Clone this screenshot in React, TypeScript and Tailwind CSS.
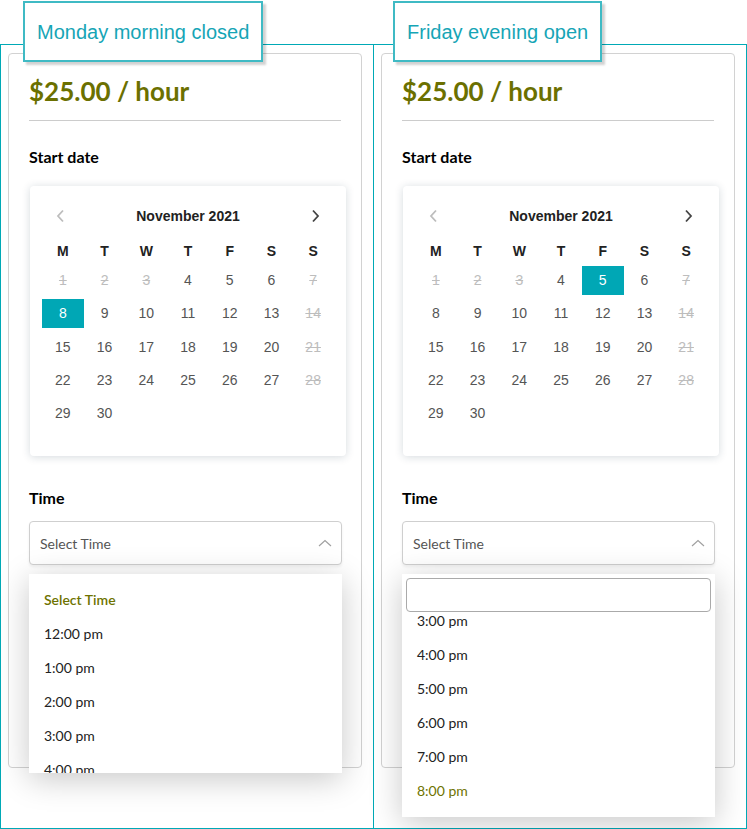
import React from "react";

const JOST = "font-['Lato','Noto_Sans',sans-serif]";
const ARIAL = "font-['Liberation_Sans',Arial,sans-serif]";

const disabled = new Set([1, 2, 3, 7, 14, 21, 28]);

function Chevron({ dir, color }: { dir: "left" | "right"; color: string }) {
  return (
    <svg width="10" height="14" viewBox="0 0 10 14" fill="none">
      {dir === "left" ? (
        <polyline points="7,1.5 2,7 7,12.5" stroke={color} strokeWidth="1.8" />
      ) : (
        <polyline points="3,1.5 8,7 3,12.5" stroke={color} strokeWidth="1.8" />
      )}
    </svg>
  );
}

function Calendar({ selected }: { selected: number }) {
  const days: number[] = [];
  for (let d = 1; d <= 30; d++) days.push(d);
  return (
    <div
      className={`${ARIAL} ml-px w-[316px] h-[270px] rounded-[4px] bg-white shadow-[0_1px_8px_rgba(20,50,70,0.18)] px-[12px] pt-[18px]`}
    >
      <div className="h-[24px] flex items-center justify-between px-[14px]">
        <Chevron dir="left" color="#bdbdbd" />
        <div className="text-[14px] font-bold text-[#222]">November 2021</div>
        <Chevron dir="right" color="#444" />
      </div>
      <div className="mt-[9px] grid grid-cols-7 h-[29px] items-center text-center text-[14px] font-bold text-[#222]">
        {["M", "T", "W", "T", "F", "S", "S"].map((d, i) => (
          <div key={i}>{d}</div>
        ))}
      </div>
      <div className="grid grid-cols-7 auto-rows-[29px] gap-y-[4.33px] text-center text-[14px]">
        {days.map((d) => {
          const isSel = d === selected;
          const isDis = disabled.has(d);
          return (
            <div
              key={d}
              className={
                "flex items-center justify-center " +
                (isSel
                  ? "bg-[#00a7b5] text-white"
                  : isDis
                  ? "text-[#bdbdbd] line-through"
                  : "text-[#555]")
              }
            >
              {d}
            </div>
          );
        })}
      </div>
    </div>
  );
}

function SelectBox() {
  return (
    <div className="h-[44px] w-[313px] rounded-[4px] border border-[#cfcfcf] bg-white shadow-[0_2px_3px_rgba(0,0,0,0.06)] flex items-center justify-between pl-[10px] pr-[9px]">
      <span className={`${JOST} text-[14px] text-[#555]`}>Select Time</span>
      <svg width="14" height="8" viewBox="0 0 14 8" fill="none">
        <polyline points="1,7 7,1.5 13,7" stroke="#a0a0a0" strokeWidth="1.2" />
      </svg>
    </div>
  );
}

function Item({ children, olive, medium }: { children: React.ReactNode; olive?: boolean; medium?: boolean }) {
  return (
    <div
      className={`${JOST} h-[34px] flex items-center px-[15px] text-[14px] ${
        olive ? "text-[#6e7300]" : "text-[#222]"
      } ${medium ? "font-semibold" : ""}`}
    >
      {children}
    </div>
  );
}

function Panel({
  label,
  labelLeft,
  selected,
  right,
}: {
  label: string;
  labelLeft: string;
  selected: number;
  right?: boolean;
}) {
  return (
    <div
      className={`relative w-[374px] h-[785px] border border-[#00a9b6] pt-[8px] pl-[7px] ${
        right ? "-ml-px" : ""
      }`}
    >
      <div
        className={`absolute top-[-44px] ${labelLeft} h-[61px] px-[12px] flex items-center bg-white border-2 border-[#3fbac4] shadow-[3px_3px_2px_rgba(0,0,0,0.18)] ${ARIAL} text-[20px] text-[#16a5b6] z-10`}
      >
        {label}
      </div>
      <div className="w-[354px] h-[715px] rounded-[4px] border border-[#d2d2d2] bg-white px-[20px] pt-[21px]">
        <div className={`${JOST} text-[26px] leading-[32px] font-bold text-[#6b7000]`}>
          $25.00 / hour
        </div>
        <div className="mt-[13px] h-px bg-[#cccccc]" />
        <div className={`${JOST} mt-[24px] text-[16px] leading-[24px] font-bold text-black`}>
          Start date
        </div>
        <div className="mt-[17px]">
          <Calendar selected={selected} />
        </div>
        <div className={`${JOST} mt-[30px] text-[16px] leading-[24px] font-bold text-black`}>
          Time
        </div>
        <div className="relative mt-[11px]">
          <SelectBox />
          {!right ? (
            <div className="absolute left-0 top-[53px] w-[313px] h-[199px] bg-white shadow-[0_6px_30px_rgba(0,0,0,0.22)] overflow-hidden pt-[8px] z-20">
              <Item olive medium>
                Select Time
              </Item>
              <Item>12:00 pm</Item>
              <Item>1:00 pm</Item>
              <Item>2:00 pm</Item>
              <Item>3:00 pm</Item>
              <Item>4:00 pm</Item>
            </div>
          ) : (
            <div className="absolute left-0 top-[53px] w-[313px] h-[243px] bg-white shadow-[0_6px_30px_rgba(0,0,0,0.22)] overflow-hidden p-[4px] z-20">
              <div className="h-[34px] rounded-[4px] border border-[#aaaaaa] bg-white" />
              <div className="h-[192px] overflow-hidden -mx-[4px]">
                <div className="-mt-[9px]">
                  <Item>3:00 pm</Item>
                  <Item>4:00 pm</Item>
                  <Item>5:00 pm</Item>
                  <Item>6:00 pm</Item>
                  <Item>7:00 pm</Item>
                  <Item olive>8:00 pm</Item>
                </div>
              </div>
            </div>
          )}
        </div>
      </div>
    </div>
  );
}

export default function App() {
  return (
    <div className="w-[747px] h-[829px] bg-white pt-[44px] flex overflow-hidden">
      <Panel label="Monday morning closed" labelLeft="left-[22px]" selected={8} />
      <Panel label="Friday evening open" labelLeft="left-[19px]" selected={5} right />
    </div>
  );
}
